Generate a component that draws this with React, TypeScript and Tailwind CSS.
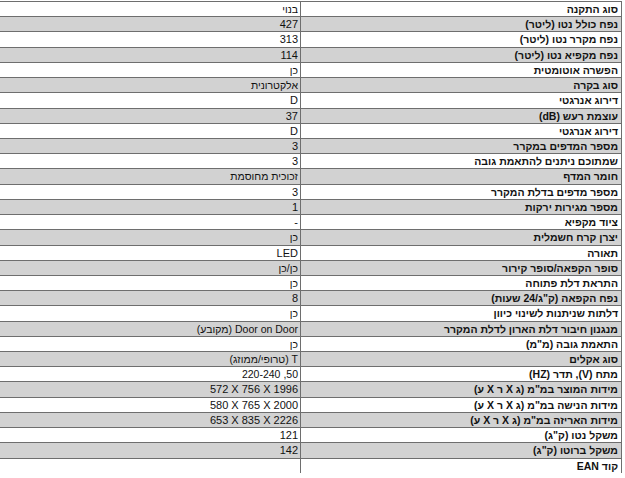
import React from 'react';

const rows: [string, string][] = [
  ['סוג התקנה', 'בנוי'],
  ['נפח כולל נטו (ליטר)', '427'],
  ['נפח מקרר נטו (ליטר)', '313'],
  ['נפח מקפיא נטו (ליטר)', '114'],
  ['הפשרה אוטומטית', 'כן'],
  ['סוג בקרה', 'אלקטרונית'],
  ['דירוג אנרגטי', 'D'],
  ['עוצמת רעש (dB)', '37'],
  ['דירוג אנרגטי', 'D'],
  ['מספר המדפים במקרר', '3'],
  ['שמתוכם ניתנים להתאמת גובה', '3'],
  ['חומר המדף', 'זכוכית מחוסמת'],
  ['מספר מדפים בדלת המקרר', '3'],
  ['מספר מגירות ירקות', '1'],
  ['ציוד מקפיא', '-'],
  ['יצרן קרח חשמלית', 'כן'],
  ['תאורה', 'LED'],
  ['סופר הקפאה/סופר קירור', 'כן/כן'],
  ['התראת דלת פתוחה', 'כן'],
  ['נפח הקפאה (ק"ג/24 שעות)', '8'],
  ['דלתות שניתנות לשינוי כיוון', 'כן'],
  ['מנגנון חיבור דלת הארון לדלת המקרר', 'Door on Door (מקובע)'],
  ['התאמת גובה (מ"מ)', 'כן'],
  ['סוג אקלים', 'T (טרופי/ממוזג)'],
  ['מתח (V), תדר (HZ)', '50, 220-240'],
  ['מידות המוצר במ"מ (ג X ר X ע)', '572 X 756 X 1996'],
  ['מידות הנישה במ"מ (ג X ר X ע)', '580 X 765 X 2000'],
  ['מידות האריזה במ"מ (ג X ר X ע)', '653 X 835 X 2226'],
  ['משקל נטו (ק"ג)', '121'],
  ['משקל ברוטו (ק"ג)', '142'],
  ['קוד EAN', ''],
];

// values made only of latin letters / digits keep their written order
const ltr = (v: string) => /^[0-9A-Z \-]+$/.test(v);

export default function App() {
  return (
    <div className="h-[478px] w-[625px] overflow-hidden bg-white pt-[1px] font-['Liberation_Sans',sans-serif] text-[10.5px] text-[#111]">
      <div dir="rtl" className="mr-[3px] flex flex-col">
        {rows.map(([label, value], i) => (
          <div
            key={i}
            className={
              'flex h-[15.23px] shrink-0 border-t border-[#6e6e6e] leading-[15px] ' +
              (i % 2 === 1 ? 'bg-[#d2d2d2]' : 'bg-white')
            }
          >
            <div className="w-[322px] shrink-0 border-x border-[#6e6e6e] pr-[3px] text-right font-bold whitespace-nowrap">
              {label}
            </div>
            <div className="flex-1 pr-[2px] text-right whitespace-nowrap">
              {ltr(value) ? <span dir="ltr" className="text-[11px]">{value}</span> : value}
            </div>
          </div>
        ))}
      </div>
    </div>
  );
}
